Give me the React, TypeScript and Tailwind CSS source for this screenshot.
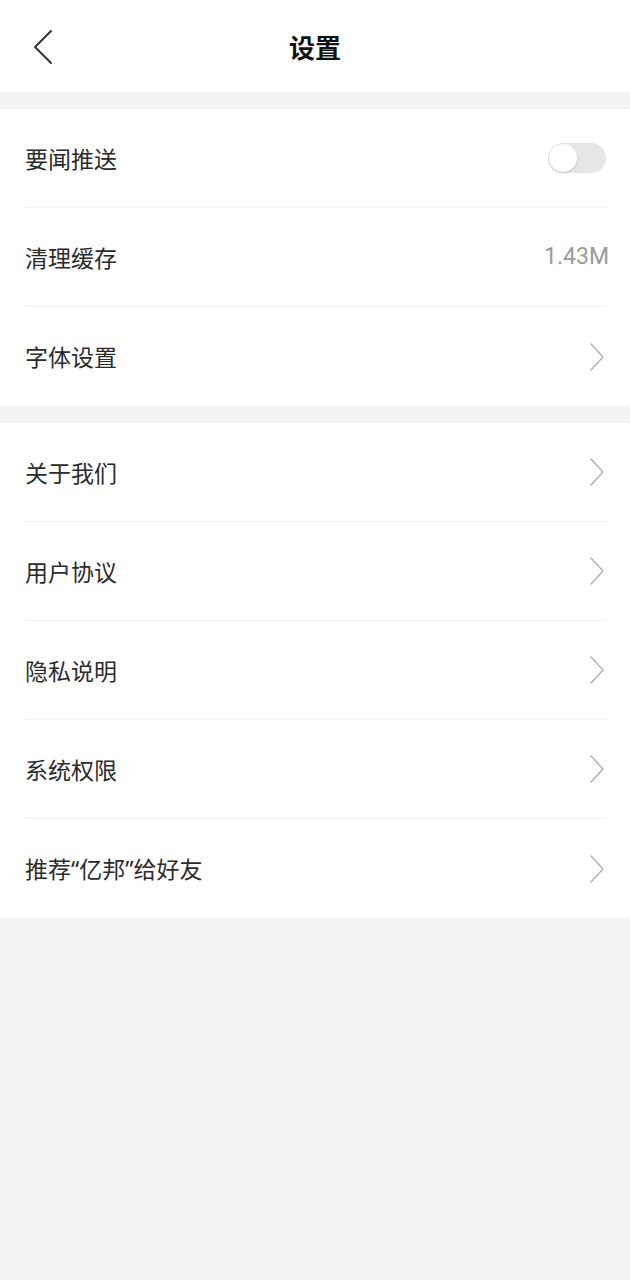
import React from "react";

const font = { fontFamily: '"Noto Sans CJK SC", "Noto Sans", sans-serif' };
const latin = { fontFamily: '"Noto Sans", "Noto Sans CJK SC", sans-serif' };

function Chevron() {
  return (
    <svg width="18" height="30" viewBox="0 0 18 30" fill="none">
      <path d="M3 2 L15 15 L3 28" stroke="#b5b5b5" strokeWidth="1.6" strokeLinecap="round" strokeLinejoin="round" />
    </svg>
  );
}

function Row({ label, right, last }: { label: React.ReactNode; right: React.ReactNode; last?: boolean }) {
  return (
    <div className="pl-[25px] pr-[24px]">
      <div className={`flex h-[99px] items-center justify-between ${last ? "" : "border-b border-[#f0f0f0]"}`}>
        <span className="text-[23px] text-[#2b2b2b]">{label}</span>
        {right}
      </div>
    </div>
  );
}

export default function App() {
  return (
    <div className="min-h-[1280px] w-[630px] bg-[#f4f4f4]" style={font}>
      <div className="relative flex h-[92px] items-center justify-center bg-white">
        <div className="absolute left-[32px] top-[29px]">
          <svg width="22" height="36" viewBox="0 0 22 36" fill="none">
            <path d="M19 2 L3 18 L19 34" stroke="#333" strokeWidth="2" strokeLinecap="round" strokeLinejoin="round" />
          </svg>
        </div>
        <span className="text-[26px] font-bold text-[#111]">设置</span>
      </div>
      <div className="mt-[17px] bg-white">
        <Row
          label="要闻推送"
          right={
            <div className="flex h-[30px] w-[58px] items-center rounded-full bg-[#e6e6e6]">
              <div className="ml-[1px] h-[28px] w-[28px] rounded-full bg-white shadow-[0_1px_2px_rgba(0,0,0,0.2)]" />
            </div>
          }
        />
        <Row
          label="清理缓存"
          right={
            <span className="mr-[-3px] text-[23px] text-[#9a9a9a]" style={{ fontFamily: '"Roboto", "Noto Sans", sans-serif' }}>
              1.43M
            </span>
          }
        />
        <Row label="字体设置" right={<Chevron />} last />
      </div>
      <div className="mt-[17px] bg-white">
        <Row label="关于我们" right={<Chevron />} />
        <Row label="用户协议" right={<Chevron />} />
        <Row label="隐私说明" right={<Chevron />} />
        <Row label="系统权限" right={<Chevron />} />
        <Row
          label={
            <>
              推荐<span style={latin}>“</span>亿邦<span style={latin}>”</span>给好友
            </>
          }
          right={<Chevron />}
          last
        />
      </div>
    </div>
  );
}
